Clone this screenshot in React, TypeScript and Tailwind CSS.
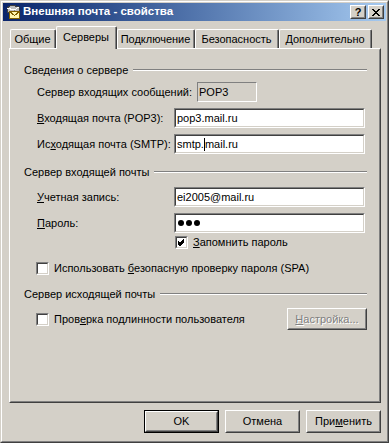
import React from "react";

const FONT = "font-['Liberation_Sans',Arial,sans-serif]";

function U({ children }: { children: React.ReactNode }) {
  return <span className="underline underline-offset-[1px]">{children}</span>;
}

/** Classic sunken edit box. */
function Edit({ children, width = "w-[191px]" }: { children?: React.ReactNode; width?: string }) {
  return (
    <div className={"h-[20px] border border-t-[#808080] border-l-[#808080] border-r-white border-b-white " + width}>
      <div className="flex h-full items-center border border-t-[#404040] border-l-[#404040] border-r-[#d4d0c8] border-b-[#d4d0c8] bg-white pl-[1px]">
        {children}
      </div>
    </div>
  );
}

function Check({ checked }: { checked?: boolean }) {
  return (
    <div className="h-[13px] w-[13px] shrink-0 border border-t-[#808080] border-l-[#808080] border-r-white border-b-white">
      <div className="h-full w-full border border-t-[#404040] border-l-[#404040] border-r-[#d4d0c8] border-b-[#d4d0c8] bg-white">
        {checked && (
          <svg width="9" height="9" viewBox="0 0 9 9">
            <path d="M1 3.5 L3 5.5 L7 1.5 M1 4.5 L3 6.5 L7 2.5 M1 5.5 L3 7.5 L7 3.5" stroke="#000" strokeWidth="1" fill="none" shapeRendering="crispEdges" />
          </svg>
        )}
      </div>
    </div>
  );
}

function Group({ label }: { label: string }) {
  return (
    <div className="flex h-[14px] items-center">
      <span className="whitespace-nowrap">{label}</span>
      <div className="ml-[5px] h-[2px] flex-1 border-t border-t-[#808080] border-b border-b-white" />
    </div>
  );
}

function Button({ children, def, disabled }: { children: React.ReactNode; def?: boolean; disabled?: boolean }) {
  const body = (
    <div className="h-full border border-t-white border-l-white border-r-[#404040] border-b-[#404040]">
      <div
        className={
          "flex h-full items-center justify-center border border-t-[#d4d0c8] border-l-[#d4d0c8] border-r-[#808080] border-b-[#808080] " +
          (disabled ? "text-[#808080] [text-shadow:1px_1px_0_#fff]" : "text-black")
        }
      >
        {children}
      </div>
    </div>
  );
  if (def) {
    return <div className="h-[23px] w-[75px] border border-black">{body}</div>;
  }
  return <div className="h-[23px] w-[75px]">{body}</div>;
}

function Tab({ label, w, active }: { label: string; w: string; active?: boolean }) {
  if (active) {
    return (
      <div className={"relative z-10 -mb-px h-[23px] rounded-tl-[2px] rounded-tr-[2px] border-t border-l border-r border-t-white border-l-white border-r-[#404040] bg-[#d4d0c8] " + w}>
        <div className="flex h-full items-center justify-center border-r border-r-[#808080] pb-[2px]">{label}</div>
      </div>
    );
  }
  return (
    <div className={"h-[19px] rounded-tl-[2px] rounded-tr-[2px] border-t border-l border-r border-t-white border-l-white border-r-[#404040] " + w}>
      <div className="flex h-full items-center justify-center border-r border-r-[#808080]">{label}</div>
    </div>
  );
}

function TitleIcon() {
  return (
    <svg width="17" height="16" viewBox="0 0 17 16" shapeRendering="crispEdges">
      <path d="M3 4 L8 1 L15 3 L15 7 L10 10 L3 8 Z" fill="#c0c0c0" stroke="#404040" strokeWidth="1" />
      <path d="M3 4 L10 6 L15 3" fill="none" stroke="#fff" strokeWidth="1" />
      <path d="M10 6 L10 10" stroke="#808080" strokeWidth="1" />
      <rect x="5.5" y="7.5" width="10" height="7" fill="#fff8b0" stroke="#806000" />
      <path d="M5.5 7.5 L10.5 11.5 L15.5 7.5" fill="none" stroke="#806000" />
    </svg>
  );
}

function TitleButton({ children }: { children: React.ReactNode }) {
  return (
    <div className="h-[14px] w-[16px] border border-t-white border-l-white border-r-[#404040] border-b-[#404040] bg-[#d4d0c8]">
      <div className="flex h-full items-center justify-center border border-t-[#d4d0c8] border-l-[#d4d0c8] border-r-[#808080] border-b-[#808080]">
        {children}
      </div>
    </div>
  );
}

export default function App() {
  return (
    <div className={"h-[443px] w-[389px] border border-t-[#d4d0c8] border-l-[#d4d0c8] border-r-[#404040] border-b-[#404040] text-[11px] leading-none text-black " + FONT}>
      <div className="flex h-full flex-col border border-t-white border-l-white border-r-[#808080] border-b-[#808080] bg-[#d4d0c8] p-px">
        {/* title bar */}
        <div className="flex h-[18px] items-center bg-gradient-to-r from-[#0a246a] to-[#a6caf0] pl-[1px] pr-[2px]">
          <TitleIcon />
          <span className="ml-[2px] text-[11.5px] font-bold text-white">Внешняя почта - свойства</span>
          <div className="ml-auto flex gap-[2px]">
            <TitleButton>
              <span className="text-[11px] font-bold leading-none">?</span>
            </TitleButton>
            <TitleButton>
              <svg width="8" height="7" viewBox="0 0 8 7" shapeRendering="crispEdges">
                <path d="M0 0h2v1h-2zM6 0h2v1h-2zM1 1h2v1h-2zM5 1h2v1h-2zM2 2h4v1h-4zM3 3h2v1h-2zM2 4h4v1h-4zM1 5h2v1h-2zM5 5h2v1h-2zM0 6h2v1h-2zM6 6h2v1h-2z" fill="#000" />
              </svg>
            </TitleButton>
          </div>
        </div>

        {/* tabs */}
        <div className="ml-[7px] flex h-[27px] items-end">
          <Tab label="Общие" w="w-[46px]" />
          <Tab label="Серверы" w="w-[61px]" active />
          <Tab label="Подключение" w="w-[78px]" />
          <Tab label="Безопасность" w="w-[84px]" />
          <Tab label="Дополнительно" w="w-[93px]" />
        </div>

        {/* panel */}
        <div className="ml-[6px] h-[355px] w-[372px] border border-t-white border-l-white border-r-[#404040] border-b-[#404040]">
          <div className="h-full border border-t-[#d4d0c8] border-l-[#d4d0c8] border-r-[#808080] border-b-[#808080] pl-[13px] pr-[12px] pt-[13px]">
            <Group label="Сведения о сервере" />
            <div className="mt-[5px] flex h-[20px] items-center pl-[13px]">
              <span className="w-[160px]">Сервер входящих сообщений:</span>
              <div className="h-[20px] w-[60px] border border-t-[#808080] border-l-[#808080] border-r-white border-b-white">
                <div className="flex h-full items-center pl-[1px]">POP3</div>
              </div>
            </div>
            <div className="mt-[6px] flex h-[20px] items-center pl-[13px]">
              <span className="w-[137px]">
                <U>В</U>ходящая почта (POP3):
              </span>
              <Edit>pop3.mail.ru</Edit>
            </div>
            <div className="mt-[6px] flex h-[20px] items-center pl-[13px]">
              <span className="w-[137px]">
                Ис<U>х</U>одящая почта (SMTP):
              </span>
              <Edit>
                smtp.<span className="inline-block h-[13px] w-px bg-black" />mail.ru
              </Edit>
            </div>

            <div className="mt-[11px]">
              <Group label="Сервер входящей почты" />
            </div>
            <div className="mt-[8px] flex h-[20px] items-center pl-[13px]">
              <span className="w-[137px]">
                <U>У</U>четная запись:
              </span>
              <Edit>ei2005@mail.ru</Edit>
            </div>
            <div className="mt-[6px] flex h-[20px] items-center pl-[13px]">
              <span className="w-[137px]">
                <U>П</U>ароль:
              </span>
              <Edit>
                <div className="ml-px flex gap-[2px]">
                  <div className="h-[6px] w-[6px] rounded-full bg-black" />
                  <div className="h-[6px] w-[6px] rounded-full bg-black" />
                  <div className="h-[6px] w-[6px] rounded-full bg-black" />
                </div>
              </Edit>
            </div>
            <div className="mt-[3px] flex h-[13px] items-center pl-[151px]">
              <Check checked />
              <span className="ml-[5px]">
                <U>З</U>апомнить пароль
              </span>
            </div>
            <div className="mt-[13px] flex h-[13px] items-center pl-[12px]">
              <Check />
              <span className="ml-[5px]">
                Использовать <U>б</U>езопасную проверку пароля (SPA)
              </span>
            </div>

            <div className="mt-[12px]">
              <Group label="Сервер исходящей почты" />
            </div>
            <div className="mt-[7px] flex h-[22px] items-center pl-[12px]">
              <Check />
              <span className="ml-[5px]">
                Пров<U>е</U>рка подлинности пользователя
              </span>
              <div className="ml-auto h-[22px] w-[80px] border border-t-white border-l-white border-r-[#404040] border-b-[#404040]">
                <div className="flex h-full items-center justify-center border border-t-[#d4d0c8] border-l-[#d4d0c8] border-r-[#808080] border-b-[#808080] text-[#808080] [text-shadow:1px_1px_0_#fff]">
                  <span>
                    <U>Н</U>астройка...
                  </span>
                </div>
              </div>
            </div>
          </div>
        </div>

        {/* dialog buttons */}
        <div className="mt-[7px] flex justify-end gap-[6px] pr-[5px]">
          <Button def>OK</Button>
          <Button>Отмена</Button>
          <Button>
            <span>
              При<U>м</U>енить
            </span>
          </Button>
        </div>
      </div>
    </div>
  );
}
